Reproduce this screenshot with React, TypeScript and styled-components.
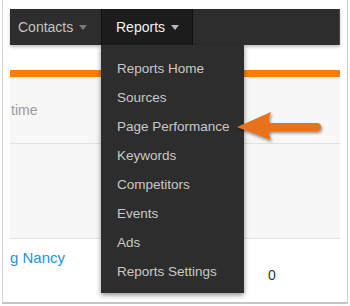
import * as React from 'react';
import styled, { createGlobalStyle } from 'styled-components';

const GlobalStyle = createGlobalStyle`
	body {
		margin: 0;
		background: #fff;
		font-family: "Liberation Sans", Arial, Helvetica, sans-serif;
	}
`;

const Frame = styled.div`
	position: relative;
	box-sizing: border-box;
	width: 346px;
	height: 304px;
	margin-left: 2px;
	padding: 9px 7px 0;
	border-left: 1px solid #d6d6d6;
	border-right: 1px solid #cfcfcf;
	border-bottom: 2px solid #c4c4c4;
	overflow: hidden;
`;

const NavBar = styled.nav`
	display: flex;
	height: 36px;
	background: #2d2d2d;
	border-right: 1px solid #4a4a4a;
	box-shadow: 0 2px 3px rgba(0, 0, 0, 0.25);
	position: relative;
	z-index: 2;
`;

const NavItem = styled.div<{ $active?: boolean; $pad: number; $width: number }>`
	position: relative;
	box-sizing: border-box;
	width: ${(p) => p.$width}px;
	display: flex;
	align-items: center;
	gap: 6px;
	padding-left: ${(p) => p.$pad}px;
	font-size: 14px;
	color: ${(p) => (p.$active ? '#f2f2f2' : '#c4c4c4')};
	background: ${(p) => (p.$active ? '#1c1c1c' : 'transparent')};
	border-left: 1px solid ${(p) => (p.$active ? '#111' : 'transparent')};
	border-right: 1px solid ${(p) => (p.$active ? '#111' : 'transparent')};
`;

const Caret = styled.span<{ $light?: boolean }>`
	width: 0;
	height: 0;
	margin-top: 1px;
	border-left: 4.5px solid transparent;
	border-right: 4.5px solid transparent;
	border-top: 5px solid ${(p) => (p.$light ? '#b8b8b8' : '#7a7a7a')};
`;

const Menu = styled.ul`
	position: absolute;
	top: 100%;
	left: -1px;
	width: 143px;
	margin: 0;
	padding: 9px 0 7px;
	list-style: none;
	background: #2d2d2d;
	box-shadow: 0 2px 5px rgba(0, 0, 0, 0.45);
`;

const MenuItem = styled.li`
	height: 29px;
	line-height: 29px;
	padding-left: 16px;
	font-size: 13.5px;
	color: #c9c9c9;
	white-space: nowrap;
`;

const Accent = styled.div`
	height: 7px;
	margin-top: 25px;
	background: #fb7d05;
`;

const Row = styled.div<{ $height: number; $shaded?: boolean }>`
	display: flex;
	height: ${(p) => p.$height}px;
	background: ${(p) => (p.$shaded ? '#f7f7f7' : '#fff')};
	border-bottom: 1px solid ${(p) => (p.$shaded ? '#e2e2e2' : 'transparent')};
`;

const HeadCell = styled.div`
	display: flex;
	align-items: center;
	padding-left: 1px;
	padding-bottom: 1px;
	font-size: 14px;
	color: #9a9a9a;
`;

const NameCell = styled.div`
	width: 120px;
	padding-top: 10px;
	font-size: 15px;
	color: #2b90d3;
	white-space: nowrap;
`;

const CountCell = styled.div`
	padding-top: 28px;
	padding-left: 138px;
	font-size: 14px;
	color: #333;
`;

const Pointer = styled.svg`
	position: absolute;
	left: 228px;
	top: 106px;
	z-index: 3;
`;

const reportLinks = [
	'Reports Home',
	'Sources',
	'Page Performance',
	'Keywords',
	'Competitors',
	'Events',
	'Ads',
	'Reports Settings',
];

const App = () => (
	<>
		<GlobalStyle />
		<Frame>
			<NavBar>
				<NavItem $pad={7} $width={91}>
					Contacts <Caret />
				</NavItem>
				<NavItem $active $pad={14} $width={92}>
					Reports <Caret $light />
					<Menu>
						{reportLinks.map((link) => (
							<MenuItem key={link}>{link}</MenuItem>
						))}
					</Menu>
				</NavItem>
			</NavBar>
			<Accent />
			<Row $height={66} $shaded>
				<HeadCell>time</HeadCell>
			</Row>
			<Row $height={94} $shaded />
			<Row $height={60}>
				<NameCell>g Nancy</NameCell>
				<CountCell>0</CountCell>
			</Row>
			<Pointer width="100" height="44" viewBox="0 0 100 44">
				<defs>
					<filter id="arrowShadow" x="-10%" y="-20%" width="130%" height="160%">
						<feDropShadow dx="1" dy="2" stdDeviation="1.4" floodColor="#000" floodOpacity="0.45" />
					</filter>
				</defs>
				<path
					d="M6 21 L40 6 Q37 14 39 17 L86 17 A4 4 0 0 1 86 25 L39 25 Q37 28 40 34 Z"
					fill="#e8711f"
					filter="url(#arrowShadow)"
				/>
			</Pointer>
		</Frame>
	</>
);

export default App;
